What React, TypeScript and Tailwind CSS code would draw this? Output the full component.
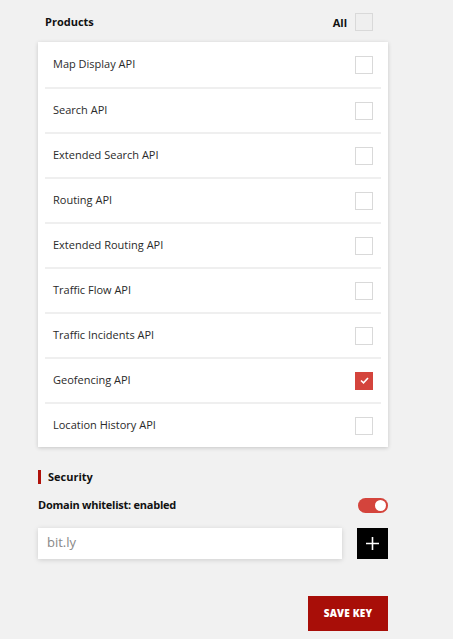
import { ReactNode } from "react";

const products = [
  { name: "Map Display API", checked: false },
  { name: "Search API", checked: false },
  { name: "Extended Search API", checked: false },
  { name: "Routing API", checked: false },
  { name: "Extended Routing API", checked: false },
  { name: "Traffic Flow API", checked: false },
  { name: "Traffic Incidents API", checked: false },
  { name: "Geofencing API", checked: true },
  { name: "Location History API", checked: false },
];

export default function App() {
  return (
    <div
      className="min-h-[639px] w-[453px] bg-[#f1f1f1] text-[#222]"
      style={{ fontFamily: '"Open Sans", "Liberation Sans", sans-serif' }}
    >
      <div className="w-[350px] ml-[38px] pt-[12px]">
        <ProductsHeader />
        <ProductList />
        <SecuritySection />
        <div className="flex justify-end mt-[37px]">
          <button className="w-[80px] h-[35px] bg-[#a80e08] text-white text-[10px] font-extrabold tracking-[0.2px]">
            SAVE KEY
          </button>
        </div>
      </div>
    </div>
  );
}

function ProductsHeader() {
  return (
    <div className="flex items-center justify-between h-[20px] pl-[7px] pr-[15px]">
      <p className="text-[11px] font-bold text-[#111]">Products</p>
      <div className="flex items-center gap-[8px]">
        <span className="text-[11px] font-bold text-[#111] mt-[2px]">All</span>
        <div className="w-[18px] h-[18px] border border-[#d9d9d9] bg-[#efefef]" />
      </div>
    </div>
  );
}

function ProductList() {
  return (
    <div className="mt-[10px] bg-white shadow-[0_1px_4px_rgba(0,0,0,0.18)] px-[7px]">
      {products.map((p, i) => (
        <div
          key={p.name}
          className={`flex items-center justify-between h-[45px] pl-[8px] pr-[8px] ${
            i > 0 ? "border-t-[2px] border-[#efefef]" : ""
          }`}
        >
          <span className="text-[11px] text-[#2a2a2a]">{p.name}</span>
          <Checkbox checked={p.checked} />
        </div>
      ))}
    </div>
  );
}

function Checkbox({ checked }: { checked: boolean }) {
  if (checked) {
    return (
      <div className="w-[18px] h-[18px] bg-[#d4443c] flex items-center justify-center">
        <svg width="9" height="7" viewBox="0 0 9 7">
          <path d="M1 3.5 L3.5 5.8 L8 1" stroke="white" strokeWidth="1.6" fill="none" />
        </svg>
      </div>
    );
  }
  return <div className="w-[18px] h-[18px] border border-[#d9d9d9] bg-white" />;
}

function SecuritySection() {
  return (
    <div className="mt-[23px]">
      <div className="flex items-center gap-[7px] h-[14px]">
        <div className="w-[3px] h-[14px] bg-[#b0120b]" />
        <span className="text-[11px] font-bold text-[#111]">Security</span>
      </div>
      <div className="flex items-center justify-between mt-[13px]">
        <span className="text-[11px] font-bold text-[#111] tracking-[-0.25px]">
          Domain whitelist: enabled
        </span>
        <Toggle />
      </div>
      <div className="flex items-center justify-between mt-[14px]">
        <InputBox>bit.ly</InputBox>
        <button className="w-[31px] h-[31px] bg-black flex items-center justify-center">
          <svg width="15" height="15" viewBox="0 0 15 15">
            <path d="M7.5 1 V14 M1 7.5 H14" stroke="white" strokeWidth="1.6" />
          </svg>
        </button>
      </div>
    </div>
  );
}

function Toggle() {
  return (
    <div className="w-[30px] h-[15px] rounded-full bg-[#d4443c] flex items-center justify-end pr-[2px]">
      <div className="w-[11px] h-[11px] rounded-full bg-white" />
    </div>
  );
}

function InputBox({ children }: { children: ReactNode }) {
  return (
    <div className="w-[304px] h-[31px] bg-white shadow-[0_1px_5px_rgba(0,0,0,0.15)] flex items-center pl-[9px]">
      <span className="text-[13px] text-[#888]">{children}</span>
    </div>
  );
}
